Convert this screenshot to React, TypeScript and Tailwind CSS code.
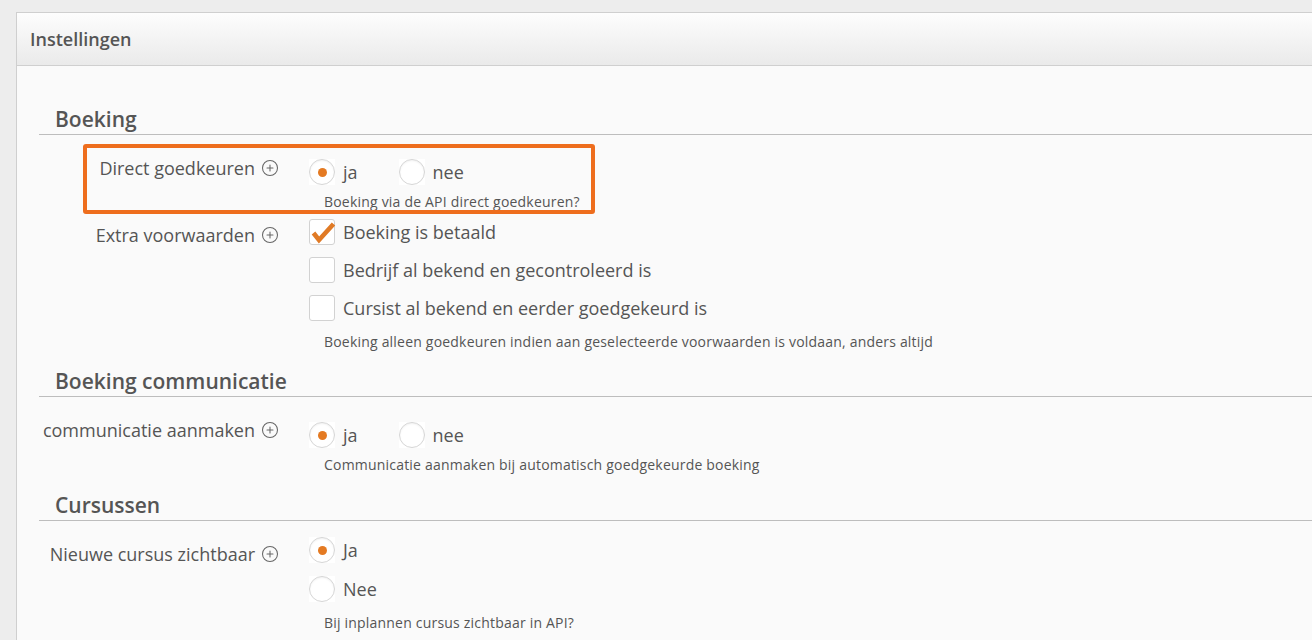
import { CirclePlus } from "lucide-react";

const font = { fontFamily: '"Open Sans", "Noto Sans", sans-serif' };

function Radio({ label, checked = false }: { label: string; checked?: boolean }) {
  return (
    <label className="flex items-center gap-2">
      <span className="flex h-[26px] w-[26px] items-center justify-center bg-white">
        <span className="flex h-[26px] w-[26px] items-center justify-center rounded-full border border-[#d6d6d6] bg-white shadow-[inset_0_1px_2px_rgba(0,0,0,0.06)]">
          {checked && <span className="h-[9px] w-[9px] rounded-full bg-[#e47a22]" />}
        </span>
      </span>
      <span className="text-[18px] leading-[26px] text-[#555]">{label}</span>
    </label>
  );
}

function Checkbox({ label, checked = false }: { label: string; checked?: boolean }) {
  return (
    <label className="flex items-center gap-2">
      <span className="relative h-[26px] w-[26px] rounded-[3px] border border-[#d2d2d2] bg-white">
        {checked && (
          <svg className="absolute -left-px -top-px" width="28" height="28" viewBox="0 0 28 28">
            <path d="M4.5 14 L10 21 L24.5 5" fill="none" stroke="#e07a25" strokeWidth="4.6" strokeLinejoin="miter" />
          </svg>
        )}
      </span>
      <span className="text-[18px] leading-[26px] text-[#555]">{label}</span>
    </label>
  );
}

function SectionTitle({ children, className = "" }: { children: React.ReactNode; className?: string }) {
  return (
    <h2 className={`border-b border-[#bdbdbd] pb-px pl-4 text-[21px] font-semibold leading-[28px] text-[#555] ${className}`}>
      {children}
    </h2>
  );
}

function Row({
  label,
  children,
  help,
  className = "",
  controlsClass = "",
  helpGap = "mt-2",
}: {
  label: string;
  children: React.ReactNode;
  help: string;
  className?: string;
  controlsClass?: string;
  helpGap?: string;
}) {
  return (
    <div className={`grid grid-cols-[240px_1fr] gap-x-[30px] ${className}`}>
      <div className="flex items-start justify-end gap-[6px] pt-[5px]">
        <span className="text-[18px] leading-[24px] text-[#555]">{label}</span>
        <CirclePlus className="mt-[3px] h-[18px] w-[18px] text-[#666]" strokeWidth={1.4} />
      </div>
      <div className={controlsClass}>
        {children}
        <p className={`pl-[15px] text-[14px] leading-[18px] tracking-[0.2px] text-[#555] ${helpGap}`}>{help}</p>
      </div>
    </div>
  );
}

export default function App() {
  return (
    <div className="min-h-[640px] overflow-hidden bg-[#ededed] pt-3 pl-4" style={font}>
      <div className="-mr-4 border-y border-l border-[#cfcfcf] bg-[#fafafa]">
        <div className="flex h-[53px] items-center border-b border-[#cfcfcf] bg-gradient-to-b from-[#fdfdfd] to-[#eaeaea] pl-[13px]">
          <span className="text-[18px] font-semibold text-[#555]">Instellingen</span>
        </div>

        <div className="pb-10 pl-[22px] pt-[39px]">
          <SectionTitle>Boeking</SectionTitle>

          <div className="relative mt-4">
            <div className="pointer-events-none absolute left-[44px] -top-[7px] h-[70px] w-[512px] rounded-[3px] border-4 border-[#ee6d1d]" />
            <Row label="Direct goedkeuren" help="Boeking via de API direct goedkeuren?" controlsClass="pt-2">
              <div className="flex gap-[41px]">
                <Radio label="ja" checked />
                <Radio label="nee" />
              </div>
            </Row>
          </div>

          <Row
            label="Extra voorwaarden"
            help="Boeking alleen goedkeuren indien aan geselecteerde voorwaarden is voldaan, anders altijd"
            className="mt-[7px]"
            controlsClass="pt-px"
            helpGap="mt-3"
          >
            <div className="flex flex-col gap-3">
              <Checkbox label="Boeking is betaald" checked />
              <Checkbox label="Bedrijf al bekend en gecontroleerd is" />
              <Checkbox label="Cursist al bekend en eerder goedgekeurd is" />
            </div>
          </Row>

          <SectionTitle className="mt-4">Boeking communicatie</SectionTitle>

          <Row
            label="communicatie aanmaken"
            help="Communicatie aanmaken bij automatisch goedgekeurde boeking"
            className="mt-4"
            controlsClass="pt-[9px]"
          >
            <div className="flex gap-[41px]">
              <Radio label="ja" checked />
              <Radio label="nee" />
            </div>
          </Row>

          <SectionTitle className="mt-[17px]">Cursussen</SectionTitle>

          <Row
            label="Nieuwe cursus zichtbaar"
            help="Bij inplannen cursus zichtbaar in API?"
            className="mt-4"
            helpGap="mt-3"
          >
            <div className="flex flex-col gap-[13px]">
              <Radio label="Ja" checked />
              <Radio label="Nee" />
            </div>
          </Row>
        </div>
      </div>
    </div>
  );
}
